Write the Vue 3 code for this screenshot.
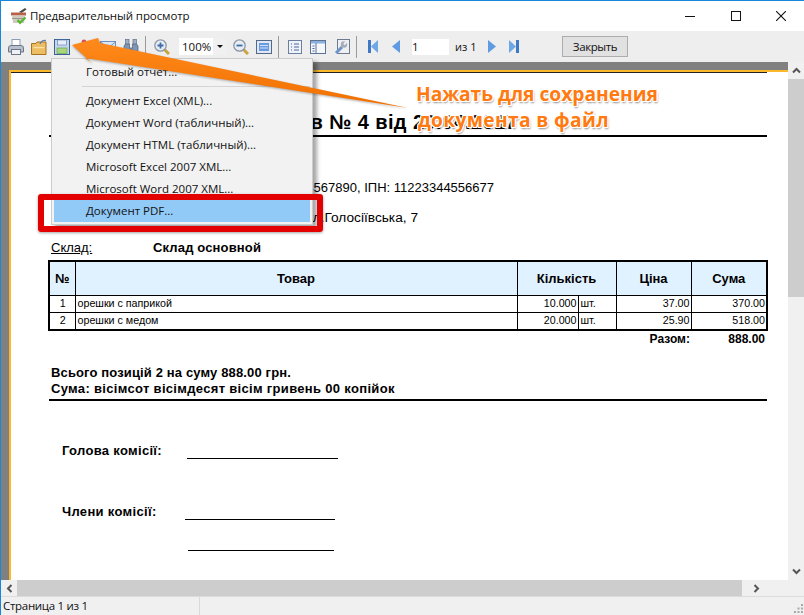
<script setup>
const menuItems = [
  'Документ Excel (XML)...',
  'Документ Word (табличный)...',
  'Документ HTML (табличный)...',
  'Microsoft Excel 2007 XML...',
  'Microsoft Word 2007 XML...'
]

const rows = [
  { n: 1, name: 'орешки с паприкой', qty: '10.000', unit: 'шт.', price: '37.00', sum: '370.00' },
  { n: 2, name: 'орешки с медом', qty: '20.000', unit: 'шт.', price: '25.90', sum: '518.00' }
]
</script>

<template>
  <div class="window">
    <header class="titlebar">
      <svg class="app-icon" width="18" height="18" viewBox="0 0 18 18">
        <path d="M9 5 L15 1 L16.500 2.500 L11.500 6 Z" fill="#4a4a4a" />
        <rect x="1" y="5.500" width="15" height="3" fill="#b9604a" />
        <path d="M2 8.500 H15 L14 16 H3 Z" fill="#cfcac0" />
        <rect x="2" y="11" width="13" height="1" fill="#9a968c" />
        <path d="M7.500 13 L10 15.800 L15.500 10.500" fill="none" stroke="#5cb531" stroke-width="2.200" />
      </svg>
      <span class="title-text">Предварительный просмотр</span>
      <div class="win-controls">
        <span class="win-btn"><svg width="10" height="10" viewBox="0 0 10 10"><path d="M0 5.500 H10" stroke="#111" /></svg></span>
        <span class="win-btn"><svg width="10" height="10" viewBox="0 0 10 10"><rect x=".5" y=".5" width="9" height="9" fill="none" stroke="#111" /></svg></span>
        <span class="win-btn"><svg width="10" height="10" viewBox="0 0 10 10"><path d="M0 0 L10 10 M10 0 L0 10" stroke="#111" stroke-width="1.100" /></svg></span>
      </div>
    </header>

    <div class="toolbar">
      <div class="tool-group">
        <svg class="tool" viewBox="0 0 16 16">
          <rect x="4" y="0.500" width="8" height="7" fill="#fff" stroke="#8d9db5" />
          <path d="M.5 9 Q.5 6.500 3 6.500 H13 Q15.500 6.500 15.500 9 V13 H.5 Z" fill="#b7c0cc" stroke="#6d7785" />
          <rect x="3.500" y="10.500" width="9" height="5" fill="#eef1f5" stroke="#6d7785" />
        </svg>
        <svg class="tool" viewBox="0 0 16 16">
          <path d="M.5 4.500 H5 L6 3 H15 V15.500 H.5 Z" fill="#ecbd63" stroke="#a8731e" />
          <rect x="2.500" y="8" width="11" height="1.200" fill="#fbe3a8" />
          <path d="M9 5 Q11 0.500 15 1.500" fill="none" stroke="#5a7fb0" stroke-width="1.200" />
        </svg>
        <svg class="tool" viewBox="0 0 16 16">
          <rect x=".5" y=".5" width="15" height="15" fill="#c4d6ec" stroke="#3c5f94" />
          <rect x="3.500" y="1" width="9" height="5" fill="#e4edf8" stroke="#5c7eae" stroke-width=".6" />
          <rect x="3" y="9" width="10" height="5.500" fill="#a9d67c" stroke="#5d9a3c" stroke-width=".6" />
        </svg>
        <svg class="tool" viewBox="0 0 16 16">
          <circle cx="7" cy="3" r="2.400" fill="#d9525f" />
          <path d="M7 5 V10" stroke="#9a8d88" stroke-width="1.400" />
        </svg>
        <svg class="tool" viewBox="0 0 16 16">
          <rect x=".5" y="2.500" width="15" height="11" fill="#dbe7f6" stroke="#6d8fbd" />
          <path d="M.5 3 L8 9 L15.500 3" fill="none" stroke="#6d8fbd" />
        </svg>
        <svg class="tool" viewBox="0 0 16 16">
          <rect x="2.500" y=".5" width="3.500" height="5" fill="#9fb0c4" stroke="#5f7088" stroke-width=".7" />
          <rect x="10" y=".5" width="3.500" height="5" fill="#9fb0c4" stroke="#5f7088" stroke-width=".7" />
          <path d="M1 7 L2.500 5 H6.500 V9 H9.500 V5 H13.500 L15 7 V15.500 H10 V11 H6 V15.500 H1 Z" fill="#7e95b3" stroke="#4e5f78" stroke-width=".7" />
        </svg>
      </div>
      <i class="sep first-sep"></i>
      <svg class="tool lens" viewBox="0 0 16 16">
        <path d="M10 10 L15 15" stroke="#c9a53e" stroke-width="3" />
        <circle cx="6.500" cy="6.500" r="5.700" fill="#e8edf3" stroke="#8a96a6" stroke-width="1.300" />
        <path d="M6.500 3.500 V9.500 M3.500 6.500 H9.500" stroke="#3d6cab" stroke-width="1.800" />
      </svg>
      <div class="zoom-combo">
        <span>100%</span>
        <b class="combo-arrow"><em></em></b>
      </div>
      <svg class="tool lens-out" viewBox="0 0 16 16">
        <path d="M10 10 L15 15" stroke="#c9a53e" stroke-width="3" />
        <circle cx="6.500" cy="6.500" r="5.700" fill="#e8edf3" stroke="#8a96a6" stroke-width="1.300" />
        <path d="M3.500 6.500 H9.500" stroke="#3d6cab" stroke-width="1.800" />
      </svg>
      <svg class="tool page-tool" viewBox="0 0 16 16">
        <rect x=".5" y="1.500" width="15" height="13" fill="#dfe8f4" stroke="#54688a" />
        <rect x="3" y="4" width="10" height="8" fill="#6a9ae0" />
        <path d="M4 6.500 H12 M4 9 H12" stroke="#cfe0f7" />
      </svg>
      <i class="sep second-sep"></i>
      <svg class="tool outline" viewBox="0 0 16 16">
        <rect x="1.500" y="1.500" width="13" height="13" fill="#eef3fa" stroke="#6b7f9e" />
        <path d="M4 5 H5 M7 5 H12 M4 8 H5 M7 8 H12 M4 11 H5 M7 11 H12" stroke="#48689a" />
      </svg>
      <svg class="tool panes" viewBox="0 0 16 16">
        <rect x=".5" y="1.500" width="15" height="13" fill="#f4f7fb" stroke="#5e7291" />
        <rect x="1" y="2" width="14" height="2.500" fill="#8db1de" />
        <path d="M6 4 V14" stroke="#5e7291" />
        <path d="M2.500 7 H4.500 M2.500 9.500 H4.500 M2.500 12 H4.500" stroke="#48689a" />
      </svg>
      <svg class="tool wrench" viewBox="0 0 16 16">
        <rect x="3.500" y=".5" width="12" height="14" fill="#eef0f4" stroke="#6d7a90" />
        <path d="M2 14 L8 8" stroke="#6f93c8" stroke-width="3" />
        <circle cx="10" cy="5.500" r="3.200" fill="#a7adb8" />
        <path d="M10 5.500 L13 2" stroke="#eef0f4" stroke-width="2" />
      </svg>
      <i class="sep third-sep"></i>
      <svg class="nav nav-first" width="10" height="13" viewBox="0 0 10 13">
        <rect x="0" y="0" width="3" height="13" fill="#3f78c4" />
        <path d="M10 0 V13 L3 6.500 Z" fill="#6ea6e6" />
      </svg>
      <svg class="nav nav-prev" width="8" height="13" viewBox="0 0 8 13">
        <path d="M8 0 V13 L0 6.500 Z" fill="#5e9be0" />
      </svg>
      <input class="page-input" value="1" />
      <span class="page-of">из 1</span>
      <svg class="nav nav-next" width="8" height="13" viewBox="0 0 8 13">
        <path d="M0 0 V13 L8 6.500 Z" fill="#5e9be0" />
      </svg>
      <svg class="nav nav-last" width="10" height="13" viewBox="0 0 10 13">
        <rect x="7" y="0" width="3" height="13" fill="#3f78c4" />
        <path d="M0 0 V13 L7 6.500 Z" fill="#6ea6e6" />
      </svg>
      <button class="close-btn">Закрыть</button>
    </div>

    <div class="viewer">
      <div class="viewport">
        <div class="page">
          <div class="doc">
            <div class="doc-title">Акт списання в № 4 від 20.04.2017</div>
            <div class="doc-line org">ЄДРПОУ: 1234567890, ІПН: 11223344556677</div>
            <div class="doc-line addr">м.Київ, вул.Голосіївська, 7</div>
            <div class="stock">
              <span class="stock-label">Склад:</span>
              <b>Склад основной</b>
            </div>

            <table class="goods">
              <colgroup>
                <col class="c-n" /><col class="c-name" /><col class="c-qty" /><col class="c-unit" /><col class="c-price" /><col class="c-sum" />
              </colgroup>
              <thead>
                <tr>
                  <th>№</th>
                  <th>Товар</th>
                  <th colspan="2">Кількість</th>
                  <th>Ціна</th>
                  <th>Сума</th>
                </tr>
              </thead>
              <tbody>
                <tr v-for="row in rows" :key="row.n">
                  <td class="center">{{ row.n }}</td>
                  <td>{{ row.name }}</td>
                  <td class="right">{{ row.qty }}</td>
                  <td>{{ row.unit }}</td>
                  <td class="right">{{ row.price }}</td>
                  <td class="right">{{ row.sum }}</td>
                </tr>
              </tbody>
            </table>

            <div class="total">
              <span class="total-label">Разом:</span>
              <span class="total-value">888.00</span>
            </div>

            <div class="summary">
              <div class="sum-first">Всього позицій 2 на суму 888.00 грн.</div>
              <div class="sum-second">Сума: вісімсот вісімдесят вісім гривень 00 копійок</div>
            </div>

            <div class="sign head-sign">
              <b>Голова комісії:</b>
              <i class="sign-line"></i>
            </div>
            <div class="sign member-sign">
              <b>Члени комісії:</b>
              <i class="sign-line"></i>
            </div>
            <i class="sign-line extra-line"></i>
          </div>
        </div>
      </div>
      <div class="vscroll">
        <span class="arrow-cell"><svg width="9" height="7" viewBox="0 0 9 7"><path d="M1 5.500 L4.500 2 L8 5.500" fill="none" stroke="#555" stroke-width="2" /></svg></span>
        <div class="vtrack"><div class="vthumb"></div></div>
        <span class="arrow-cell"><svg width="9" height="7" viewBox="0 0 9 7"><path d="M1 1.500 L4.500 5 L8 1.500" fill="none" stroke="#555" stroke-width="2" /></svg></span>
      </div>
    </div>

    <div class="hscroll">
      <span class="arrow-cell"><svg width="7" height="9" viewBox="0 0 7 9"><path d="M5.500 1 L2 4.500 L5.500 8" fill="none" stroke="#555" stroke-width="2" /></svg></span>
      <div class="hthumb"></div>
      <span class="arrow-cell"><svg width="7" height="9" viewBox="0 0 7 9"><path d="M1.500 1 L5 4.500 L1.500 8" fill="none" stroke="#555" stroke-width="2" /></svg></span>
      <span class="corner"></span>
    </div>

    <footer class="status">
      <span class="status-cell">Страница 1 из 1</span>
      <svg class="grip" width="10" height="10" viewBox="0 0 10 10" fill="#a8a8a8">
        <rect x="7" y="0" width="2" height="2" /><rect x="3.500" y="3.500" width="2" height="2" /><rect x="7" y="3.500" width="2" height="2" />
        <rect x="0" y="7" width="2" height="2" /><rect x="3.500" y="7" width="2" height="2" /><rect x="7" y="7" width="2" height="2" />
      </svg>
    </footer>

    <!-- выпадающее меню сохранения -->
    <ul class="save-menu">
      <li>Готовый отчет...</li>
      <li class="menu-sep"></li>
      <li v-for="item in menuItems" :key="item">{{ item }}</li>
      <li class="active">Документ PDF...</li>
    </ul>

    <!-- пометки поверх скриншота -->
    <div class="red-frame"></div>
    <svg class="arrow" width="804" height="615" viewBox="0 0 804 615">
      <defs>
        <linearGradient id="arrowFill" x1="0" y1="0" x2="0" y2="1">
          <stop offset="0" stop-color="#ff8a1c" />
          <stop offset="1" stop-color="#f07000" />
        </linearGradient>
      </defs>
      <path d="M72 45 L98 38 L100 43 L408 108 L85 58 L93 64 Z" fill="url(#arrowFill)" />
    </svg>
    <div class="note">
      <div>Нажать для сохранения</div>
      <div class="note-second">документа в файл</div>
    </div>
  </div>
</template>

<style>
html, body {
  margin: 0;
  background: #fff;
}
</style>

<style scoped>
.window {
  position: relative;
  width: 804px;
  height: 615px;
  box-sizing: border-box;
  border-top: 1px solid #1787dc;
  border-left: 1px solid #1787dc;
  overflow: hidden;
  display: flex;
  flex-direction: column;
  background: #f0f0f0;
  font-family: "Open Sans", "Noto Sans", sans-serif;
  color: #111;
}

.titlebar {
  height: 30px;
  flex: none;
  display: flex;
  align-items: center;
  background: #fff;
  padding-left: 9px;
}

.app-icon {
  margin-right: 2px;
}

.title-text {
  font-size: 11.500px;
  letter-spacing: -0.1px;
  margin-top: -1px;
}

.win-controls {
  margin-left: auto;
  display: flex;
}

.win-btn {
  width: 45.500px;
  height: 30px;
  display: flex;
  align-items: center;
  justify-content: center;
}

.toolbar {
  height: 31px;
  flex: none;
  display: flex;
  align-items: center;
  background: #eee;
  padding-left: 7px;
}

.tool-group {
  display: flex;
  gap: 7px;
}

.tool {
  width: 16px;
  height: 16px;
  flex: none;
}

.nav {
  flex: none;
}

.sep {
  width: 1px;
  height: 22px;
  background: #9b9b9b;
  flex: none;
}

.first-sep { margin-left: 6px; }
.lens { margin-left: 8px; }

.zoom-combo {
  margin-left: 9px;
  width: 47px;
  height: 17px;
  background: #fff;
  display: flex;
  align-items: center;
  justify-content: space-between;
  font-size: 11.500px;
  padding-left: 3px;
  box-sizing: border-box;
}

.combo-arrow {
  width: 13px;
  height: 17px;
  background: #f0f0f0;
  display: flex;
  align-items: center;
  justify-content: center;
}

.combo-arrow em {
  width: 0;
  height: 0;
  border: 3px solid transparent;
  border-top: 3px solid #111;
  border-bottom: 0;
}

.lens-out { margin-left: 7px; }
.page-tool { margin-left: 7px; }
.second-sep { margin-left: 6px; }
.outline { margin-left: 8px; }
.panes { margin-left: 7px; }
.wrench { margin-left: 8px; }
.third-sep { margin-left: 6px; }

.nav-first { margin-left: 11px; }
.nav-prev { margin-left: 14px; }

.page-input {
  margin-left: 12px;
  width: 37px;
  height: 16px;
  box-sizing: border-box;
  border: 0;
  padding: 0;
  outline: 0;
  background: #fff;
  font: 11.500px "Open Sans", sans-serif;
  color: #111;
}

.page-of {
  margin-left: 6px;
  width: 33px;
  flex: none;
  font-size: 11px;
}

.nav-last { margin-left: 13px; }

.close-btn {
  margin-left: 43px;
  width: 66px;
  height: 21px;
  background: #e1e1e1;
  border: 1px solid #adadad;
  padding: 0;
  font: 11.500px "Open Sans", sans-serif;
  letter-spacing: -0.4px;
  color: #111;
}

.viewer {
  flex: 1;
  min-height: 0;
  display: flex;
}

.viewport {
  flex: 1;
  min-width: 0;
  background: #808080;
  padding: 8px 0 0 8px;
  overflow: hidden;
}

.page {
  height: 100%;
  box-sizing: border-box;
  border-top: 2px solid #fdb92c;
  border-left: 2px solid #fdb92c;
  background: #fff;
  font-family: "Liberation Sans", Arial, sans-serif;
  color: #000;
}

.doc {
  border-top: 1px solid #222;
  padding-left: 38px;
  width: 718px;
}

.doc-title {
  box-sizing: border-box;
  height: 64px;
  border-bottom: 2px solid #000;
  padding: 38px 250px 0 0;
  text-align: right;
  font-size: 20px;
  letter-spacing: 0.4px;
  font-weight: bold;
  white-space: nowrap;
}

.doc-line {
  height: 30px;
  line-height: 30px;
  font-size: 13px;
  text-align: right;
}

.org {
  margin-top: 36px;
  padding-right: 273px;
}

.addr {
  padding-right: 349px;
  font-size: 13.700px;
}

.stock {
  margin-top: 3px;
  height: 24px;
  line-height: 24px;
  display: flex;
  font-size: 13px;
  padding-left: 2px;
}

.stock-label {
  width: 102px;
  text-decoration: underline;
}

.stock b {
  letter-spacing: 0.15px;
}

.goods {
  box-sizing: border-box;
  margin-left: -1px;
  width: 720px;
  table-layout: fixed;
  border-collapse: collapse;
  border: 2px solid #000;
}

.c-n { width: 26px; }
.c-name { width: 442px; }
.c-qty { width: 61px; }
.c-unit { width: 38px; }
.c-price { width: 75px; }

.goods th {
  height: 33px;
  padding: 0;
  border: 1px solid #000;
  background: #e0f2ff;
  font-size: 13px;
}

.goods td {
  height: 16px;
  padding: 0 1px 1px 2px;
  box-sizing: border-box;
  border: 1px solid #000;
  font-size: 10.700px;
  line-height: 15px;
  white-space: nowrap;
}

.goods .center { text-align: center; }
.goods .right { text-align: right; }

.total {
  height: 17px;
  line-height: 17px;
  display: flex;
  font-size: 12px;
  font-weight: bold;
}

.total-label {
  width: 641px;
  text-align: right;
}

.total-value {
  width: 75px;
  text-align: right;
}

.summary {
  margin-top: 17px;
  padding-left: 2px;
  height: 31px;
  font-size: 13px;
  line-height: 16px;
  font-weight: bold;
  border-bottom: 2px solid #000;
  padding-bottom: 3px;
}

.sum-first { letter-spacing: 0.14px; }
.sum-second { letter-spacing: 0.32px; }

.sign {
  display: flex;
  height: 16px;
  line-height: 16px;
  padding-left: 13px;
  font-size: 13px;
}

.sign b {
  width: 125px;
  flex: none;
  letter-spacing: 0.32px;
}

.head-sign { margin-top: 42px; }
.member-sign { margin-top: 45px; }
.member-sign b { width: 123px; }

.sign-line {
  display: block;
  height: 1px;
  background: #000;
  margin-top: 15px;
}

.head-sign .sign-line { width: 151px; }
.member-sign .sign-line { width: 150px; }

.extra-line {
  width: 146px;
  margin-top: 30px;
  margin-left: 139px;
}

.vscroll {
  width: 16px;
  flex: none;
  display: flex;
  flex-direction: column;
  background: #f0f0f0;
}

.arrow-cell {
  flex: none;
  width: 16px;
  height: 17px;
  display: flex;
  align-items: center;
  justify-content: center;
}

.vtrack {
  flex: 1;
}

.vthumb {
  height: 218px;
  background: #cdcdcd;
}

.hscroll {
  height: 16px;
  flex: none;
  display: flex;
  background: #f0f0f0;
}

.hscroll .arrow-cell {
  height: 16px;
}

.hthumb {
  width: 725px;
  background: #cdcdcd;
}

.hscroll .arrow-cell:nth-child(3) {
  width: 28px;
}

.corner {
  flex: 1;
}

.status {
  height: 19px;
  flex: none;
  box-sizing: border-box;
  border-top: 1px solid #dcdcdc;
  background: #f0f0f0;
  display: flex;
  align-items: center;
  justify-content: space-between;
  font-size: 11.500px;
}

.status-cell {
  width: 199px;
  height: 100%;
  box-sizing: border-box;
  border-right: 1px solid #d9d9d9;
  padding-left: 2px;
  line-height: 17px;
  letter-spacing: -0.3px;
}

.grip {
  align-self: flex-end;
  margin: 0 0 1px;
}

.save-menu {
  position: absolute;
  left: 50px;
  top: 57px;
  width: 262px;
  box-sizing: border-box;
  margin: 0;
  padding: 2px;
  list-style: none;
  background: #f2f2f2;
  border: 1px solid #ccc;
  box-shadow: 4px 4px 4px rgba(0, 0, 0, 0.35);
  font-size: 11.500px;
}

.save-menu li {
  height: 22px;
  line-height: 22px;
  padding-left: 32px;
}

.save-menu .menu-sep {
  height: 7px;
  padding: 0;
  margin-left: 28px;
  position: relative;
}

.save-menu .menu-sep::after {
  content: "";
  position: absolute;
  left: 0;
  right: 0;
  top: 3px;
  height: 1px;
  background: #d4d4d4;
}

.save-menu .active {
  background: #91c9f7;
}

.red-frame {
  position: absolute;
  left: 37px;
  top: 193px;
  width: 285px;
  height: 38px;
  box-sizing: border-box;
  border: 6px solid #e30000;
  border-radius: 3px;
  box-shadow: 0 1px 3px rgba(0, 0, 0, 0.35);
}

.arrow {
  position: absolute;
  left: -1px;
  top: -1px;
  filter: drop-shadow(0 1px 1px rgba(0, 0, 0, 0.3));
}

.note {
  position: absolute;
  left: 415px;
  top: 80px;
  font-size: 19.200px;
  line-height: 26px;
  font-weight: bold;
  color: #ff7a10;
  white-space: nowrap;
  text-shadow:
    1px 0 0 #fff, -1px 0 0 #fff, 0 1px 0 #fff, 0 -1px 0 #fff,
    1px 1px 0 #fff, -1px -1px 0 #fff, 1px -1px 0 #fff, -1px 1px 0 #fff,
    1px 2px 2px rgba(0, 0, 0, 0.45);
}

.note-second {
  padding-left: 2px;
  letter-spacing: 0.35px;
}
</style>
